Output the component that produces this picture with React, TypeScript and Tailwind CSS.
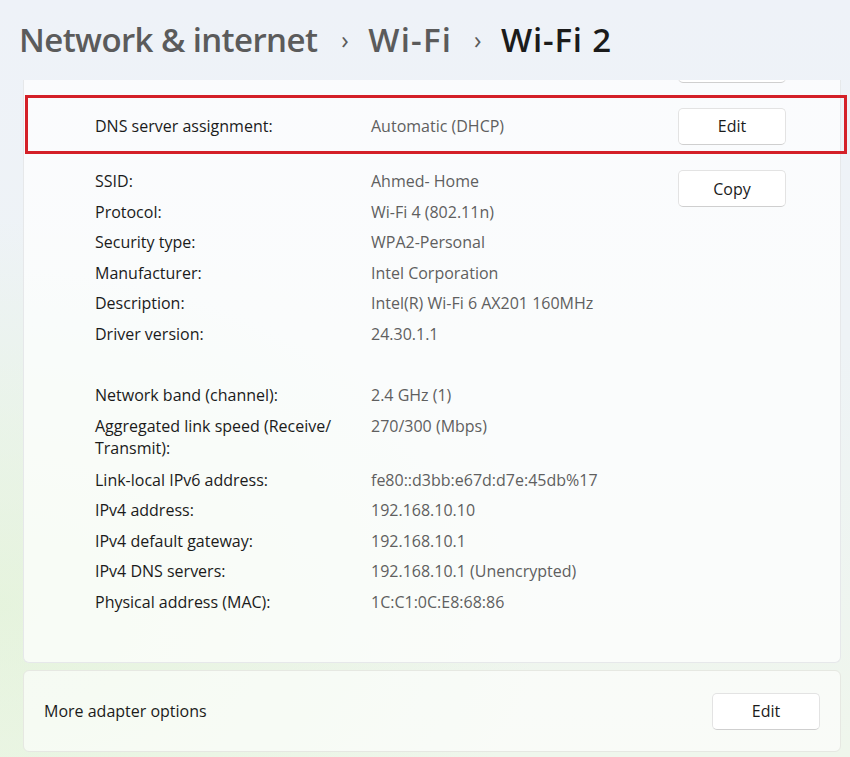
import React from "react";

const rows1: [string, string][] = [
  ["SSID:", "Ahmed- Home"],
  ["Protocol:", "Wi-Fi 4 (802.11n)"],
  ["Security type:", "WPA2-Personal"],
  ["Manufacturer:", "Intel Corporation"],
  ["Description:", "Intel(R) Wi-Fi 6 AX201 160MHz"],
  ["Driver version:", "24.30.1.1"],
];

const rows2: [string, string][] = [
  ["Network band (channel):", "2.4 GHz (1)"],
  ["Aggregated link speed (Receive/ Transmit):", "270/300 (Mbps)"],
  ["Link-local IPv6 address:", "fe80::d3bb:e67d:d7e:45db%17"],
  ["IPv4 address:", "192.168.10.10"],
  ["IPv4 default gateway:", "192.168.10.1"],
  ["IPv4 DNS servers:", "192.168.10.1 (Unencrypted)"],
  ["Physical address (MAC):", "1C:C1:0C:E8:68:86"],
];

function Btn({ children, className = "" }: { children?: React.ReactNode; className?: string }) {
  return (
    <div
      className={
        "flex h-[37px] w-[108px] shrink-0 items-center justify-center rounded-[5px] border border-[#e3e3e3] border-b-[#cfcfcf] bg-white text-[16px] text-[#1b1b1b] " +
        className
      }
    >
      {children}
    </div>
  );
}

function Row({ label, value, className = "" }: { label: string; value: string; className?: string }) {
  return (
    <div className={"flex " + className}>
      <div className="w-[260px] shrink-0 text-[#1b1b1b]">{label}</div>
      <div className="ml-[16px] text-[#5f5f5f]">{value}</div>
    </div>
  );
}

export default function App() {
  return (
    <div
      className="relative h-[757px] w-[850px] overflow-hidden bg-[linear-gradient(180deg,#eef2f8_0%,#eef3f6_45%,#eff6ec_100%)]"
      style={{ fontFamily: '"Open Sans", "Noto Sans", sans-serif' }}
    >
      <div className="pointer-events-none absolute inset-0 bg-[radial-gradient(ellipse_at_0%_80%,rgba(226,243,214,0.7),transparent_45%)]" />
      <div className="relative">
        {/* Title */}
        <div className="flex h-[80px] items-center pl-[19px] pb-[1px] text-[33px] font-semibold tracking-[-0.6px]">
          <span className="text-[#5b5b5b]">Network &amp; internet</span>
          <span className="ml-[24px] mr-[20px] text-[25px] font-normal text-[#5b5b5b]">›</span>
          <span className="tracking-[1.2px] text-[#5b5b5b]">Wi-Fi</span>
          <span className="ml-[22px] mr-[20px] text-[25px] font-normal text-[#5b5b5b]">›</span>
          <span className="tracking-[0.8px] text-[#1b1b1b]">Wi-Fi 2</span>
        </div>

        {/* Card 1 */}
        <div className="ml-[23px] w-[818px] overflow-hidden rounded-b-[6px] border-x border-b border-[#e6e8ea] bg-white/70 text-[16px]">
          <div className="flex justify-end pr-[54px]">
            <Btn className="-mt-[34px]" />
          </div>
          <div className="mt-[25px] flex h-[36px] items-center pl-[71px] pr-[54px]">
            <div className="w-[260px] shrink-0 text-[#1b1b1b]">DNS server assignment:</div>
            <div className="ml-[16px] flex-1 text-[#5f5f5f]">Automatic (DHCP)</div>
            <Btn>Edit</Btn>
          </div>
          <div className="mt-[26px] flex pl-[71px] pr-[54px] pb-[49px]">
            <div className="flex flex-1 flex-col gap-[8.5px] leading-[22px]">
              {rows1.map(([l, v]) => (
                <Row key={l} label={l} value={v} />
              ))}
              <div className="h-[22px]" />
              {rows2.map(([l, v], i) => (
                <Row key={l} label={l} value={v} className={i === 1 ? "py-[1px]" : ""} />
              ))}
            </div>
            <Btn>Copy</Btn>
          </div>
        </div>

        {/* Card 2 */}
        <div className="ml-[23px] mt-[7px] flex h-[82px] w-[818px] items-center justify-between rounded-[6px] border border-[#e6e8e2] bg-white/60 pl-[20px] pr-[20px] pt-[1px] text-[16px]">
          <span className="text-[#1b1b1b]">More adapter options</span>
          <Btn>Edit</Btn>
        </div>
      </div>

      {/* Red highlight annotation */}
      <div className="pointer-events-none absolute left-[25px] top-[95px] h-[59px] w-[822px] border-[3px] border-[#d42028]" />
    </div>
  );
}
